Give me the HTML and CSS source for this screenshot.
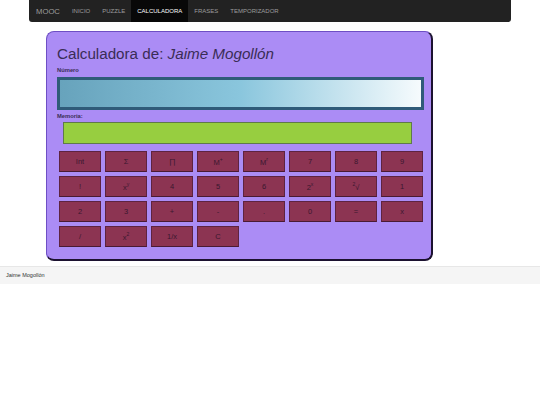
FILE: index.html
```html
<!DOCTYPE html>
<html lang="es">
<head>
    <meta charset="UTF-8">
    <title>Calculadora</title>
    <link rel="stylesheet" href="styles.css">
</head>
<body>
    <nav class="navbar">
        <span class="brand">MOOC</span>
        <a class="nav-link">INICIO</a>
        <a class="nav-link">PUZZLE</a>
        <a class="nav-link active">CALCULADORA</a>
        <a class="nav-link">FRASES</a>
        <a class="nav-link">TEMPORIZADOR</a>
    </nav>

    <div class="calc">
        <h1>Calculadora de: <em>Jaime Mogollón</em></h1>
        <label class="lbl">Número</label>
        <div class="display"></div>
        <label class="lbl">Memoria:</label>
        <div class="memory"></div>

        <div class="keys">
            <button>Int</button>
            <button>Σ</button>
            <button>∏</button>
            <button>M<sup>+</sup></button>
            <button>M<sup>r</sup></button>
            <button>7</button>
            <button>8</button>
            <button>9</button>

            <button>!</button>
            <button>x<sup>y</sup></button>
            <button>4</button>
            <button>5</button>
            <button>6</button>
            <button>2<sup>x</sup></button>
            <button><sup>2</sup>√</button>
            <button>1</button>

            <button>2</button>
            <button>3</button>
            <button>+</button>
            <button>-</button>
            <button>.</button>
            <button>0</button>
            <button>=</button>
            <button>x</button>

            <button>/</button>
            <button>x<sup>2</sup></button>
            <button>1/x</button>
            <button>C</button>
        </div>
    </div>

    <footer class="footer">Jaime Mogollón</footer>
</body>
</html>
```

FILE: styles.css
```css
body {
    margin: 0;
    font-family: "Liberation Sans", Arial, sans-serif;
    color: #333;
    background: #fff;
}

.navbar {
    display: flex;
    align-items: center;
    height: 22px;
    margin: 0 29px;
    padding-left: 7px;
    background: #222;
    border-radius: 0 0 3px 3px;
}

.brand {
    font-size: 7.7px;
    color: #9d9d9d;
    margin-right: 6px;
}

.nav-link {
    display: flex;
    align-items: center;
    height: 100%;
    padding: 0 6px;
    font-size: 6px;
    color: #9d9d9d;
}

.nav-link.active {
    background: #080808;
    color: #fff;
}

.calc {
    width: 367px;
    margin: 9px 0 0 46px;
    padding: 0 7px 12px 10px;
    background: #ab8cf5;
    border: 1px solid #6e4fc4;
    border-right: 2px solid #1c1230;
    border-bottom: 2px solid #1c1230;
    border-radius: 8px;
}

.calc h1 {
    margin: 0;
    padding-top: 12px;
    font-size: 15.2px;
    font-weight: normal;
    line-height: 19px;
    color: #3a2d55;
}

.lbl {
    display: block;
    font-size: 5.8px;
    font-weight: bold;
    line-height: 8px;
    color: #3a2d55;
}

.lbl:first-of-type {
    margin-top: 3px;
}

.display {
    height: 27px;
    margin: 3px 0 2px;
    border: 3px solid #2f5b79;
    background: linear-gradient(90deg, #67a3bc 0%, #8ac6dd 50%, #f6fbfd 100%);
}

.memory {
    height: 20px;
    width: 347px;
    margin: 2px 0 0 6px;
    background: #97ce40;
    border: 1px solid #5f7a4a;
}

.keys {
    display: grid;
    grid-template-columns: repeat(8, 42px);
    grid-auto-rows: 21px;
    gap: 4px;
    margin: 7px 0 0 2px;
}

.keys button {
    padding: 0;
    font-family: "Liberation Sans", Arial, sans-serif;
    font-size: 7.5px;
    color: #3a1830;
    background: #8c3452;
    border: 1px solid #5e2340;
    border-bottom-color: #4a1a33;
}

.keys sup {
    font-size: 5px;
}

.footer {
    margin-top: 5px;
    padding: 0 6px;
    height: 17px;
    line-height: 17px;
    font-size: 5.5px;
    color: #333;
    background: #f5f5f5;
    border-top: 1px solid #e7e7e7;
}
```
